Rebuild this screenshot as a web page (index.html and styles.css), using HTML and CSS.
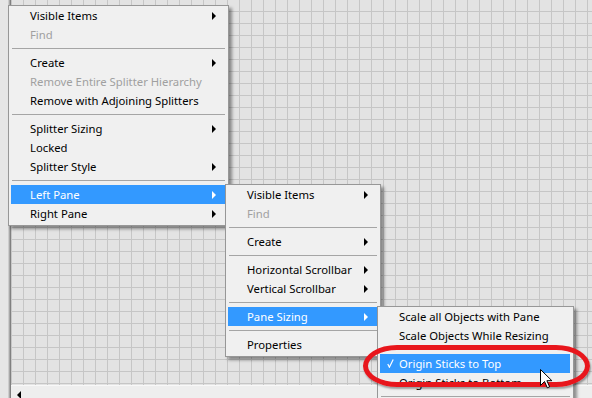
FILE: index.html
```html
<!DOCTYPE html>
<html lang="en">
<head>
    <meta charset="UTF-8">
    <title>Splitter Shortcut Menu</title>
    <link rel="stylesheet" href="styles.css">
</head>
<body>
    <div class="window">
        <div class="frame-edge"></div>
        <div class="panel">
            <div class="grid"></div>
            <div class="hscroll"><span class="scroll-left"></span></div>
        </div>
    </div>

    <ul class="menu menu-main">
        <li class="item sub">Visible Items</li>
        <li class="item disabled">Find</li>
        <li class="sep"></li>
        <li class="item sub">Create</li>
        <li class="item disabled">Remove Entire Splitter Hierarchy</li>
        <li class="item">Remove with Adjoining Splitters</li>
        <li class="sep"></li>
        <li class="item sub">Splitter Sizing</li>
        <li class="item">Locked</li>
        <li class="item sub">Splitter Style</li>
        <li class="sep"></li>
        <li class="item sub active">Left Pane</li>
        <li class="item sub">Right Pane</li>
    </ul>

    <ul class="menu menu-pane">
        <li class="item sub">Visible Items</li>
        <li class="item disabled">Find</li>
        <li class="sep"></li>
        <li class="item sub">Create</li>
        <li class="sep"></li>
        <li class="item sub">Horizontal Scrollbar</li>
        <li class="item sub">Vertical Scrollbar</li>
        <li class="sep"></li>
        <li class="item sub active">Pane Sizing</li>
        <li class="sep"></li>
        <li class="item">Properties</li>
    </ul>

    <ul class="menu menu-sizing">
        <li class="item">Scale all Objects with Pane</li>
        <li class="item">Scale Objects While Resizing</li>
        <li class="sep"></li>
        <li class="item active">
            <svg class="check" width="7" height="9" viewBox="0 0 7 9"><path d="M0.8 5 L2.4 8.2 L6.2 0.6" fill="none" stroke="#fff" stroke-width="1.2"/></svg>
            Origin Sticks to Top
        </li>
        <li class="item">Origin Sticks to Bottom</li>
        <li class="sep"></li>
    </ul>

    <div class="callout"></div>

    <svg class="cursor" width="13" height="20" viewBox="0 0 13 20">
        <path d="M0.5 0.5 L0.5 16.5 L4.5 12.5 L7.3 18.8 L9.6 17.8 L6.9 11.7 L11.9 11.7 Z" fill="#fff" stroke="#000" stroke-width="1"/>
    </svg>
</body>
</html>
```

FILE: styles.css
```css
html, body {
    margin: 0;
    height: 100%;
    overflow: hidden;
}
body {
    font-family: "Noto Sans", "Open Sans", sans-serif;
    font-size: 11.3px;
    background-color: #e8e8e8;
}
.window {
    display: flex;
    height: 398px;
}
.frame-edge {
    width: 11px;
    background: linear-gradient(to right, #e6e6e6 0, #e6e6e6 8px, #cdcdcd 8px, #cdcdcd 9px, #a8a8a8 9px, #a8a8a8 10px, #808080 10px);
}
.panel {
    flex: 1;
    display: flex;
    flex-direction: column;
}
.grid {
    flex: 1;
    background-color: #e3e3e3;
    background-image:
        linear-gradient(to right, #c6c6c6 1px, transparent 1px),
        linear-gradient(to bottom, #c6c6c6 1px, transparent 1px);
    background-size: 12px 12px;
    background-position: 0 11px;
}
.hscroll {
    height: 12px;
    border-top: 1px solid #f8f8f8;
    background-color: #eeeeee;
}
.scroll-left {
    display: block;
    width: 0;
    height: 0;
    margin: 5px 0 0 6px;
    border-style: solid;
    border-width: 4px 4px 4px 0;
    border-color: transparent #000 transparent transparent;
}

/* popup menus */
.menu {
    position: absolute;
    margin: 0;
    padding: 0 3px 2px 2px;
    list-style: none;
    box-sizing: border-box;
    background-color: #f0f0f0;
    border: 1px solid #979797;
    box-shadow: 3px 3px 3px rgba(0, 0, 0, 0.4);
}
.menu-main {
    left: 8px;
    top: 5px;
    width: 221px;
}
.menu-pane {
    left: 225px;
    top: 184px;
    width: 156px;
}
.menu-sizing {
    left: 377px;
    top: 306px;
    width: 197px;
    padding-bottom: 12px;
}
.item {
    position: relative;
    display: flex;
    justify-content: space-between;
    align-items: center;
    height: 19px;
    padding: 0 9px 0 19px;
    color: #000;
    white-space: nowrap;
}
.item.disabled {
    color: #a0a0a0;
}
.item.active {
    background-color: #3399ff;
    color: #fff;
}
.item.sub::after {
    content: "";
    border-style: solid;
    border-width: 4px 0 4px 4px;
    border-color: transparent transparent transparent currentColor;
}
.check {
    position: absolute;
    left: 7px;
    top: 5px;
}
.sep {
    height: 1px;
    margin: 4px 0 4px 1px;
    background-color: #a5a5a5;
}

/* annotation drawn over the screenshot */
.callout {
    position: absolute;
    left: 363px;
    top: 345px;
    width: 227px;
    height: 42px;
    box-sizing: border-box;
    border: 5px solid #e8161c;
    border-radius: 34px / 21px;
    box-shadow: 1px 2px 2px rgba(0, 0, 0, 0.35);
}
.cursor {
    position: absolute;
    left: 540px;
    top: 369px;
}
```
